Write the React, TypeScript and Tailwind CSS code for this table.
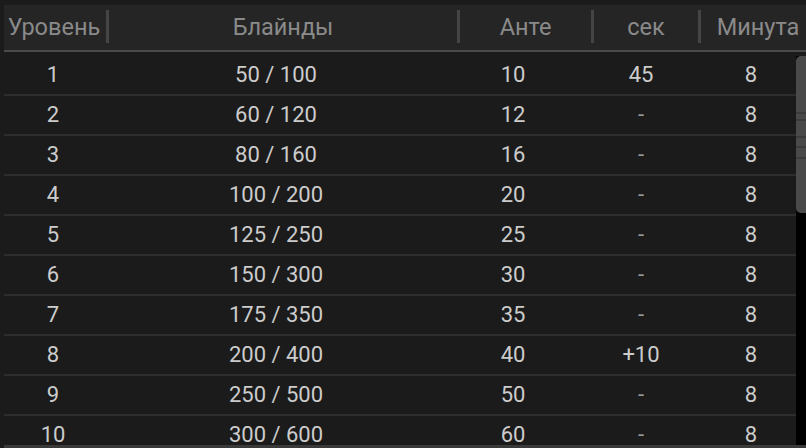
import React from 'react';

interface Level {
    level: number;
    blinds: string;
    ante: number;
    sec: string;
    minutes: number;
}

const levels: Level[] = [
    { level: 1, blinds: '50 / 100', ante: 10, sec: '45', minutes: 8 },
    { level: 2, blinds: '60 / 120', ante: 12, sec: '-', minutes: 8 },
    { level: 3, blinds: '80 / 160', ante: 16, sec: '-', minutes: 8 },
    { level: 4, blinds: '100 / 200', ante: 20, sec: '-', minutes: 8 },
    { level: 5, blinds: '125 / 250', ante: 25, sec: '-', minutes: 8 },
    { level: 6, blinds: '150 / 300', ante: 30, sec: '-', minutes: 8 },
    { level: 7, blinds: '175 / 350', ante: 35, sec: '-', minutes: 8 },
    { level: 8, blinds: '200 / 400', ante: 40, sec: '+10', minutes: 8 },
    { level: 9, blinds: '250 / 500', ante: 50, sec: '-', minutes: 8 },
    { level: 10, blinds: '300 / 600', ante: 60, sec: '-', minutes: 8 },
];

const Sep = () => <div className="w-[3px] h-[33px] mt-[-2px] bg-[#454545] shrink-0" />;

const BlindsTable: React.FC = () => {
    return (
        <div className="w-[806px] h-[448px] overflow-hidden bg-[#1b1b1b] pt-[5px] pl-[4px] font-['Roboto',sans-serif]">
            {/* Header */}
            <div className="flex items-center h-[45px] w-[831px] bg-[#252525] text-[23.5px] text-[#8a8a8a] leading-none">
                <div className="w-[102px] pr-[2px] text-center whitespace-nowrap">Уровень</div>
                <Sep />
                <div className="w-[348px] text-center">Блайнды</div>
                <Sep />
                <div className="w-[131px] text-center">Анте</div>
                <Sep />
                <div className="w-[104px] text-center">сек</div>
                <Sep />
                <div className="w-[114px] text-center whitespace-nowrap">Минута</div>
            </div>
            <div className="h-[2px] bg-[#4a4a4a]" />

            {/* Body */}
            <div className="flex h-[393px] overflow-hidden">
                <div className="w-[792px] pt-1 text-[22px] text-[#cccccc] leading-none">
                    {levels.map((row) => (
                        <div
                            key={row.level}
                            className="grid grid-cols-[98px_348px_126px_130px_90px] items-center h-[40px] border-b-2 border-[#2d2d2d] text-center"
                        >
                            <div>{row.level}</div>
                            <div>{row.blinds}</div>
                            <div>{row.ante}</div>
                            <div className={row.sec === '-' ? 'text-[#9a9a9a]' : ''}>{row.sec}</div>
                            <div>{row.minutes}</div>
                        </div>
                    ))}
                </div>
                {/* Scrollbar */}
                <div className="w-[10px] mt-1 bg-black">
                    <div className="relative h-[157px] rounded-tl-[5px] rounded-bl-[5px] bg-[#4a4a4a]">
                        <div className="absolute left-0 right-0 top-[56px] h-[2px] bg-[#3c3c3c]" />
                        <div className="absolute left-0 right-0 top-[63px] h-[2px] bg-[#3c3c3c]" />
                        <div className="absolute left-0 right-0 top-[80px] h-[2px] bg-[#3c3c3c]" />
                        <div className="absolute left-0 right-0 top-[90px] h-[2px] bg-[#3c3c3c]" />
                        <div className="absolute left-0 right-0 top-[101px] h-[2px] bg-[#3c3c3c]" />
                    </div>
                </div>
            </div>
            <div className="h-[3px] bg-[#3a3a3a]" />
        </div>
    );
};

export default function App() {
    return <BlindsTable />;
}
